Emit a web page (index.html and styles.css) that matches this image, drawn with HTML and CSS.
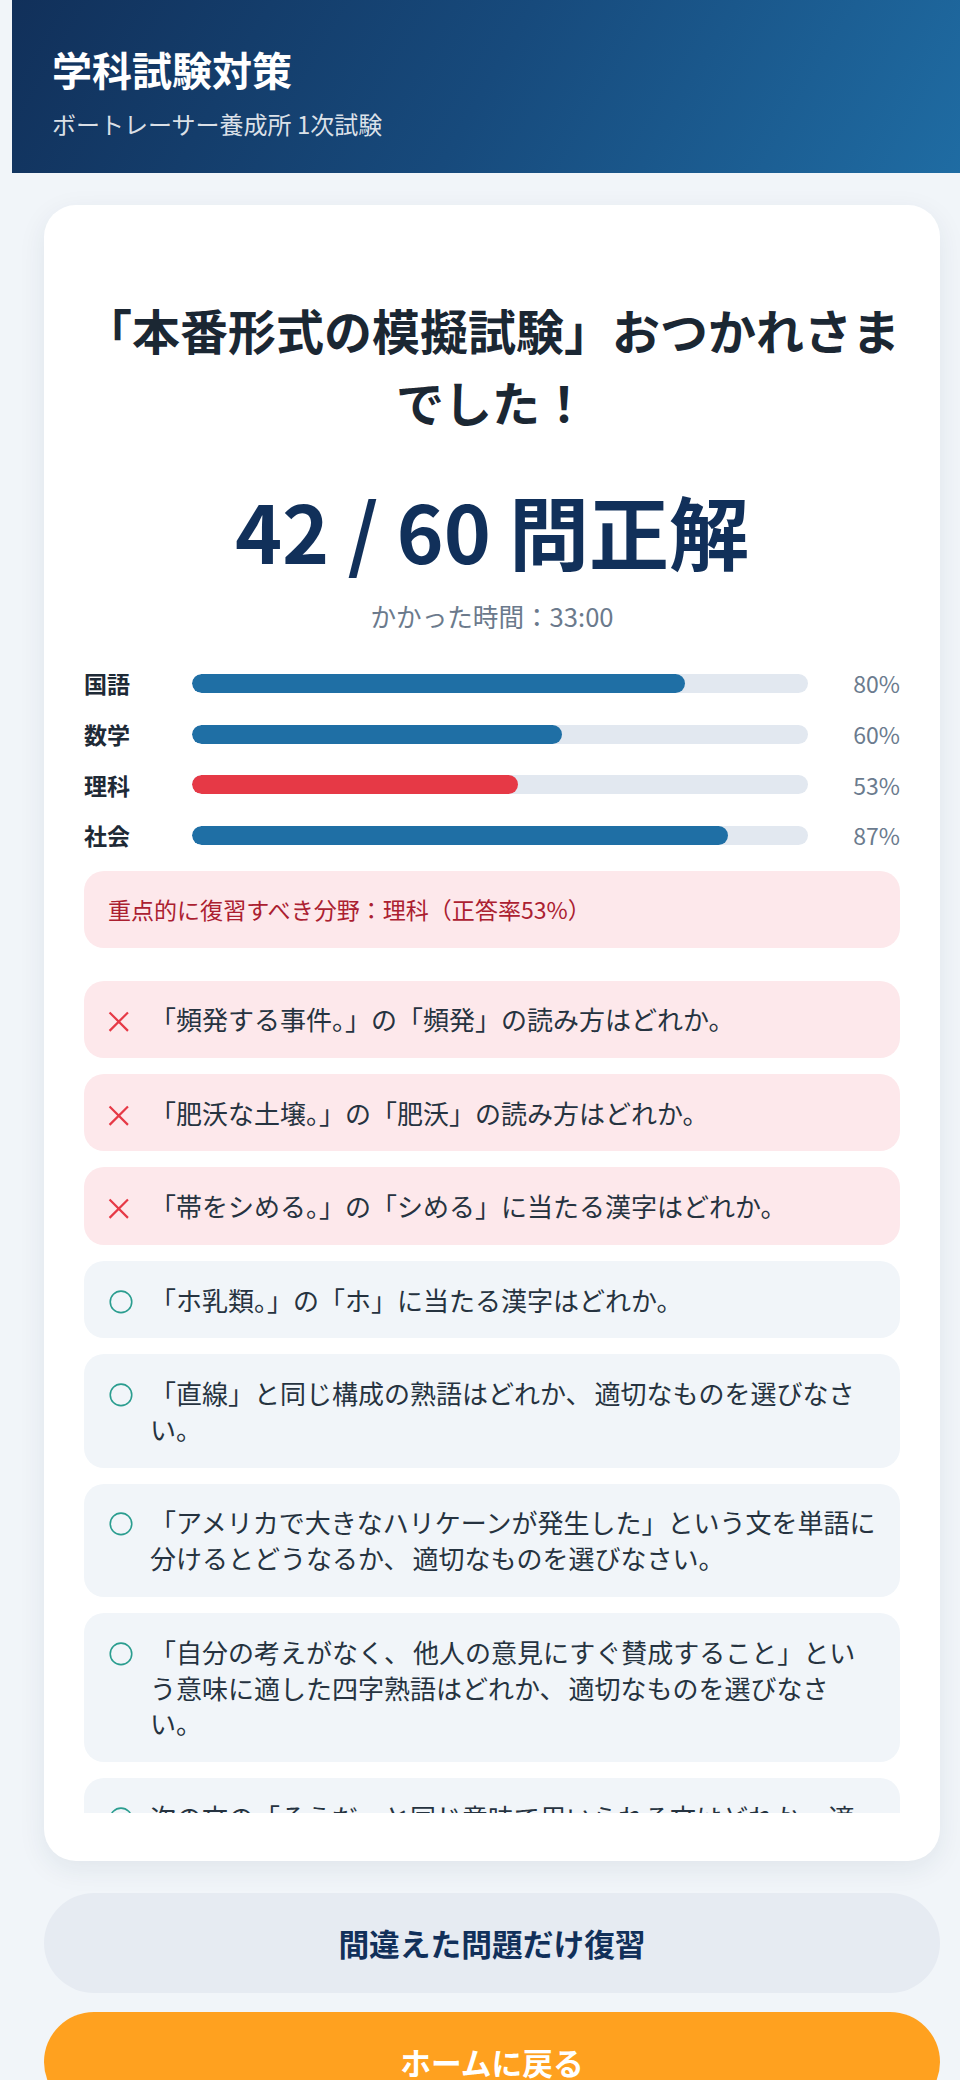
FILE: index.html
```html
<!DOCTYPE html>
<html lang="ja">
<head>
<meta charset="utf-8">
<title>学科試験対策</title>
<link rel="stylesheet" href="styles.css">
</head>
<body>
<div class="app">
  <header class="top">
    <h1 class="top-title">学科試験対策</h1>
    <p class="top-sub">ボートレーサー養成所 1次試験</p>
  </header>

  <main class="wrap">
    <section class="card">
      <h2 class="heading">「本番形式の模擬試験」おつかれさまでした！</h2>
      <div class="score">42 / 60 問正解</div>
      <div class="time">かかった時間：33:00</div>

      <div class="subjects">
        <div class="subj-label">国語</div>
        <div class="track"><div class="fill" style="width:80%"></div></div>
        <div class="subj-pct">80%</div>

        <div class="subj-label">数学</div>
        <div class="track"><div class="fill" style="width:60%"></div></div>
        <div class="subj-pct">60%</div>

        <div class="subj-label">理科</div>
        <div class="track"><div class="fill fill-weak" style="width:53%"></div></div>
        <div class="subj-pct">53%</div>

        <div class="subj-label">社会</div>
        <div class="track"><div class="fill" style="width:87%"></div></div>
        <div class="subj-pct">87%</div>
      </div>

      <div class="alert">重点的に復習すべき分野：理科（正答率53%）</div>

      <ul class="qlist">
        <li class="q q-wrong">
          <svg class="q-icon" viewBox="0 0 26 36" width="26" height="35.84" aria-hidden="true"><path d="M1.5 11.5 L20 30 M20 11.5 L1.5 30" stroke="#e63946" stroke-width="2.2" fill="none"/></svg>
          <span class="q-text">「頻発する事件。」の「頻発」の読み方はどれか。</span>
        </li>
        <li class="q q-wrong">
          <svg class="q-icon" viewBox="0 0 26 36" width="26" height="35.84" aria-hidden="true"><path d="M1.5 11.5 L20 30 M20 11.5 L1.5 30" stroke="#e63946" stroke-width="2.2" fill="none"/></svg>
          <span class="q-text">「肥沃な土壌。」の「肥沃」の読み方はどれか。</span>
        </li>
        <li class="q q-wrong">
          <svg class="q-icon" viewBox="0 0 26 36" width="26" height="35.84" aria-hidden="true"><path d="M1.5 11.5 L20 30 M20 11.5 L1.5 30" stroke="#e63946" stroke-width="2.2" fill="none"/></svg>
          <span class="q-text">「帯をシめる。」の「シめる」に当たる漢字はどれか。</span>
        </li>
        <li class="q q-right">
          <svg class="q-icon" viewBox="0 0 26 36" width="26" height="35.84" aria-hidden="true"><circle cx="13" cy="20" r="10.8" stroke="#2a9d8f" stroke-width="1.6" fill="none"/></svg>
          <span class="q-text">「ホ乳類。」の「ホ」に当たる漢字はどれか。</span>
        </li>
        <li class="q q-right">
          <svg class="q-icon" viewBox="0 0 26 36" width="26" height="35.84" aria-hidden="true"><circle cx="13" cy="20" r="10.8" stroke="#2a9d8f" stroke-width="1.6" fill="none"/></svg>
          <span class="q-text">「直線」と同じ構成の熟語はどれか<span class="tt">、</span>適切なものを選びなさい。</span>
        </li>
        <li class="q q-right">
          <svg class="q-icon" viewBox="0 0 26 36" width="26" height="35.84" aria-hidden="true"><circle cx="13" cy="20" r="10.8" stroke="#2a9d8f" stroke-width="1.6" fill="none"/></svg>
          <span class="q-text">「アメリカで大きなハリケーンが発生した」という文を単語に分けるとどうなるか<span class="tt">、</span>適切なものを選びなさい。</span>
        </li>
        <li class="q q-right">
          <svg class="q-icon" viewBox="0 0 26 36" width="26" height="35.84" aria-hidden="true"><circle cx="13" cy="20" r="10.8" stroke="#2a9d8f" stroke-width="1.6" fill="none"/></svg>
          <span class="q-text">「自分の考えがなく<span class="tt">、</span>他人の意見にすぐ賛成すること」という意味に適した四字熟語はどれか<span class="tt">、</span>適切なものを選びなさい。</span>
        </li>
        <li class="q q-right">
          <svg class="q-icon" viewBox="0 0 26 36" width="26" height="35.84" aria-hidden="true"><circle cx="13" cy="20" r="10.8" stroke="#2a9d8f" stroke-width="1.6" fill="none"/></svg>
          <span class="q-text">次の文の「そうだ」と同じ意味で用いられる文はどれか<span class="tt">、</span>適切なものを選びなさい。</span>
        </li>
      </ul>
    </section>

    <div class="actions">
      <button class="btn btn-review" type="button">間違えた問題だけ復習</button>
      <button class="btn btn-home" type="button">ホームに戻る</button>
    </div>
  </main>
</div>
</body>
</html>
```

FILE: styles.css
```css
html, body {
  margin: 0;
  padding: 0;
}

body {
  background: #f1f5f9;
  font-family: "Noto Sans CJK JP", "Noto Sans", sans-serif;
  color: #1e2a36;
  overflow: hidden;
}

.app {
  height: 2080px;
  overflow: hidden;
}

/* Header */
.top {
  margin-left: 12px;
  width: 948px;
  height: 173px;
  box-sizing: border-box;
  padding: 44.8px 40px 0 40px;
  background: linear-gradient(120deg, #11305a 0%, #174a7c 50%, #1f6ca3 100%);
  color: #ffffff;
}

.top-title {
  margin: 0;
  font-size: 40px;
  line-height: 48px;
  font-weight: 700;
}

.top-sub {
  margin: 12.8px 0 0;
  font-size: 24px;
  line-height: 36px;
  color: rgba(255, 255, 255, 0.86);
}

/* Main */
.wrap {
  margin-left: 44px;
  width: 896px;
  padding-top: 32px;
}

.card {
  background: #ffffff;
  border-radius: 32px;
  box-shadow: 0 8px 28px rgba(20, 45, 80, 0.08);
  padding: 88px 40px 48px;
  display: flex;
  flex-direction: column;
}

.heading {
  margin: 0;
  font-size: 48px;
  line-height: 72px;
  font-weight: 700;
  text-align: center;
  color: #1b2733;
}

.score {
  margin-top: 44px;
  font-size: 80px;
  line-height: 96px;
  font-weight: 700;
  text-align: center;
  color: #11305a;
}

.time {
  margin-top: 20px;
  font-size: 25.6px;
  line-height: 38.4px;
  text-align: center;
  color: #6b7a8c;
}

/* Subjects */
.subjects {
  margin-top: 31px;
  display: grid;
  grid-template-columns: 76px 1fr 60px;
  column-gap: 32px;
  row-gap: 16px;
  align-items: center;
}

.subj-label {
  font-size: 23.04px;
  line-height: 34.56px;
  font-weight: 700;
  color: #1e2a36;
}

.track {
  height: 19.2px;
  border-radius: 9.6px;
  background: #e2e8f0;
  overflow: hidden;
}

.fill {
  height: 100%;
  border-radius: 9.6px;
  background: #1f6fa5;
}

.fill-weak {
  background: #e63946;
}

.subj-pct {
  font-size: 23.04px;
  line-height: 34.56px;
  text-align: right;
  color: #6b7b8e;
}

/* Alert */
.alert {
  margin-top: 18px;
  padding: 21.2px 24px;
  border-radius: 20px;
  background: #fde8eb;
  color: #ab2030;
  font-size: 23.04px;
  line-height: 34.56px;
}

/* Question list */
.qlist {
  list-style: none;
  margin: 33px 0 0;
  padding: 0;
  max-height: 832px;
  overflow-y: auto;
  scrollbar-width: none;
  display: flex;
  flex-direction: column;
  gap: 16px;
}

.q {
  display: flex;
  align-items: flex-start;
  gap: 16px;
  padding: 20.8px 21.5px 20.8px 24px;
  border-radius: 20px;
  font-size: 26px;
  line-height: 35.84px;
  color: #263340;
  flex-shrink: 0;
}

.q-wrong {
  background: #fde8eb;
}

.q-right {
  background: #f1f5f9;
}

.q-icon {
  flex: 0 0 26px;
  display: block;
}

.q-text {
  flex: 1 1 auto;
  min-width: 0;
}

.tt {
  margin-right: 3px;
}

/* Buttons */
.actions {
  margin-top: 32px;
  display: flex;
  flex-direction: column;
  gap: 19.2px;
}

.btn {
  display: flex;
  align-items: center;
  justify-content: center;
  height: 100px;
  border: none;
  border-radius: 50px;
  font-family: "Noto Sans CJK JP", "Noto Sans", sans-serif;
  font-size: 30.72px;
  font-weight: 700;
  cursor: pointer;
}

.btn-review {
  background: #e6ebf2;
  color: #11305a;
}

.btn-home {
  background: #ffa11f;
  color: #ffffff;
}
```
